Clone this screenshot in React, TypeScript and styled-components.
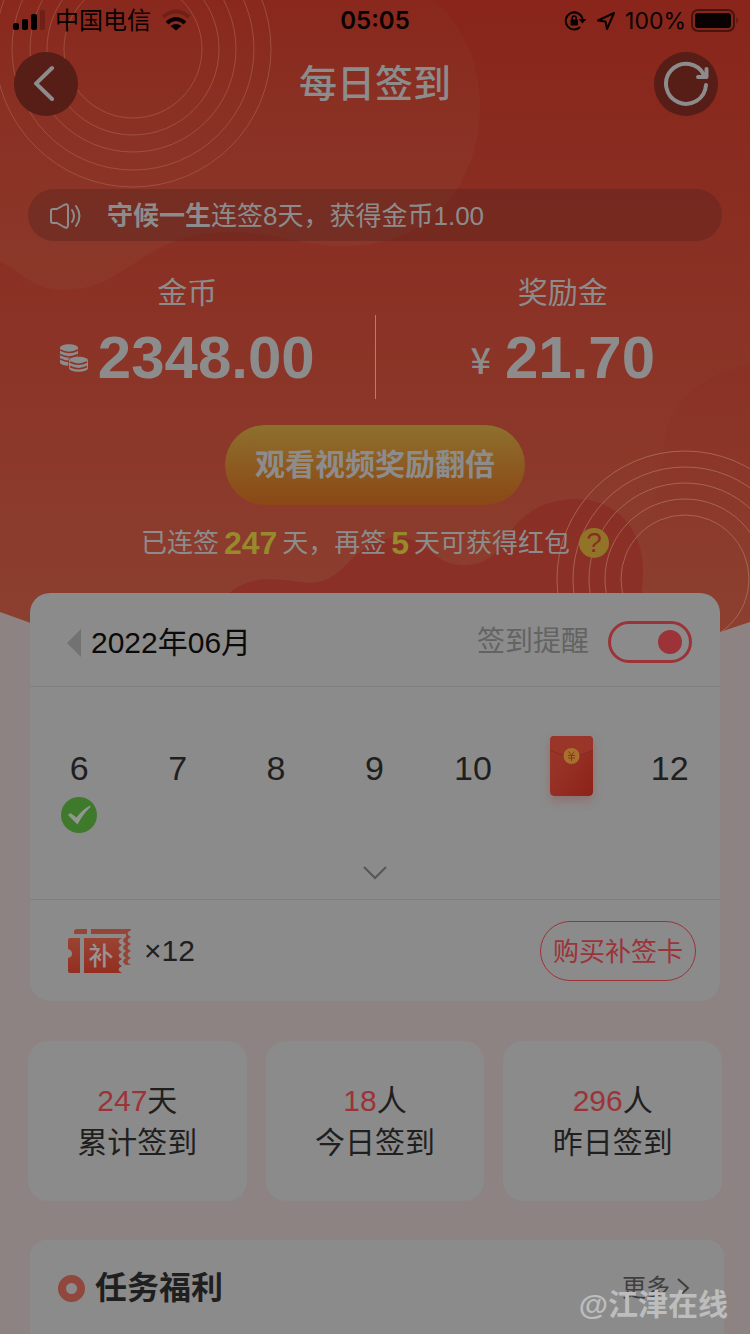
import React from 'react';
import styled, { createGlobalStyle } from 'styled-components';

const color = {
  white: '#8d8c8c',
  pink: '#8d8383',
  card: '#8b8b8b',
  line: '#7f7f7f',
  ink: '#1f1f1f',
  red: '#9c3338',
  muted: '#636363',
};

const GlobalStyle = createGlobalStyle`
  *, *::before, *::after { box-sizing: border-box; }
  html, body { margin: 0; }
  body {
    background: ${color.pink};
    color: ${color.ink};
    font-family: "Liberation Sans", "Noto Sans CJK SC", sans-serif;
    font-size: 30px;
    line-height: 42px;
  }
  button { font: inherit; color: inherit; border: 0; padding: 0; background: none; cursor: pointer; }
  h1, h2, p, ul, ol, dl, dd { margin: 0; padding: 0; list-style: none; }
  svg { display: block; flex: none; }
`;

const Page = styled.div`
  position: relative;
  display: flex;
  flex-direction: column;
  min-height: 100vh;
  overflow: hidden;
`;

const Backdrop = styled.svg`
  position: absolute;
  top: 0;
  left: 0;
  width: 100%;
  height: 700px;
  z-index: -1;
`;

const StatusBar = styled.div`
  display: grid;
  grid-template-columns: 1fr auto 1fr;
  align-items: center;
  height: 40px;
  padding: 2px 11px 0;
  color: #080202;
  font-family: Inter, "Noto Sans CJK SC", sans-serif;
  font-size: 24px;
  line-height: 38px;
`;

const StatusGroup = styled.div<{ $end?: boolean }>`
  display: flex;
  align-items: center;
  justify-content: ${(p) => (p.$end ? 'flex-end' : 'flex-start')};
  gap: ${(p) => (p.$end ? 9 : 10)}px;
`;

const Power = styled.span`
  display: flex;
  align-items: center;
  gap: 5px;
  font-size: 23px;
`;

const Clock = styled.time`
  font-weight: 600;
`;

const NavBar = styled.header`
  display: grid;
  grid-template-columns: 82px 1fr 82px;
  align-items: center;
  padding: 12px 14px;
`;

const Title = styled.h1`
  text-align: center;
  color: ${color.white};
  font-size: 38px;
  font-weight: 500;
  line-height: 60px;
`;

const RoundButton = styled.button`
  width: 64px;
  height: 64px;
  border-radius: 50%;
  background: #571d17;
  display: grid;
  place-items: center;
`;

const Notice = styled.p`
  display: flex;
  align-items: center;
  height: 52px;
  margin: 61px 28px 0;
  padding: 2px 22px 0;
  border-radius: 26px;
  background: rgba(70, 30, 28, 0.3);
  color: ${color.white};
  font-size: 26px;
`;

const NoticeText = styled.span`
  margin-left: 26px;
`;

const Balances = styled.dl`
  display: grid;
  grid-template-columns: 1fr 1px 1fr;
  margin-top: 31px;
  color: ${color.white};
`;

const Balance = styled.div`
  text-align: center;
`;

const Divider = styled.span`
  height: 84px;
  margin-top: 43px;
  background: ${color.white};
`;

const Amount = styled.dd`
  display: flex;
  align-items: center;
  justify-content: center;
  margin-top: 14px;
  gap: 10px;
  font-size: 60px;
  font-weight: 700;
  line-height: 60px;
`;

const Currency = styled.span`
  margin-right: 4px;
  font-family: "Noto Sans CJK SC", sans-serif;
  font-size: 36px;
  font-weight: 500;
`;

const VideoButton = styled.button`
  align-self: center;
  width: 300px;
  height: 80px;
  margin-top: 26px;
  border-radius: 40px;
  background: linear-gradient(#8e702d, #8b4716);
  color: ${color.white};
  font-weight: 700;
`;

const Streak = styled.p`
  display: flex;
  align-items: center;
  justify-content: center;
  gap: 5px;
  margin-top: 20px;
  color: ${color.white};
  font-size: 26px;
  line-height: 36px;
`;

const StreakCount = styled.strong`
  color: #988a2c;
  font-size: 32px;
`;

const HelpButton = styled.button`
  width: 30px;
  height: 30px;
  margin-left: 4px;
  border-radius: 50%;
  background: #927428;
  color: #8a2e23;
  font-size: 28px;
  line-height: 30px;
`;

const Card = styled.section`
  margin: 32px 30px 0;
  border-radius: 20px;
  background: ${color.card};
`;

const CardBar = styled.div`
  display: flex;
  align-items: center;
  justify-content: space-between;
  height: 94px;
  padding: 4px 28px 0 36px;
  border-bottom: 1px solid ${color.line};
`;

const MonthButton = styled.button`
  display: flex;
  align-items: center;
  gap: 10px;
  padding-top: 2px;
  color: #0a0a0a;
`;

const Reminder = styled.label`
  display: flex;
  align-items: center;
  gap: 19px;
  color: ${color.muted};
  font-size: 28px;
`;

const Toggle = styled.input`
  appearance: none;
  display: flex;
  align-items: center;
  width: 84px;
  height: 42px;
  margin: 0;
  padding: 0 7px;
  border: 3px solid ${color.red};
  border-radius: 21px;

  &::before {
    content: '';
    width: 24px;
    height: 24px;
    border-radius: 50%;
    background: ${color.red};
  }
  &:checked { justify-content: flex-end; }
`;

const Week = styled.ol`
  display: grid;
  grid-template-columns: repeat(7, 1fr);
  padding: 46px 1px 0 0;
  height: 150px;
`;

const Day = styled.li`
  display: flex;
  flex-direction: column;
  align-items: center;
  font-size: 34px;
`;

const DayButton = styled.button`
  height: 64px;
  line-height: 70px;
`;

const Envelope = styled.svg`
  margin-top: 2px;
  border-radius: 4px;
  box-shadow: 0 5px 10px rgba(150, 60, 50, 0.3);
`;

const ExpandButton = styled.button`
  display: grid;
  place-items: center;
  width: 100%;
  height: 63px;
  padding-top: 10px;
  border-bottom: 1px solid ${color.line};
`;

const CardFoot = styled.div`
  display: flex;
  align-items: center;
  justify-content: space-between;
  height: 101px;
  padding: 0 24px 0 38px;
`;

const Tickets = styled.span`
  display: flex;
  align-items: center;
  gap: 12px;
`;

const BuyButton = styled.button`
  width: 156px;
  height: 60px;
  padding-top: 2px;
  border: 1px solid ${color.red};
  border-radius: 30px;
  color: ${color.red};
  font-size: 26px;
`;

const Stats = styled.ul`
  display: grid;
  grid-template-columns: repeat(3, 1fr);
  gap: 19px;
  margin: 40px 28px 0;
`;

const Stat = styled.li`
  padding: 39px 0 37px;
  border-radius: 20px;
  background: ${color.card};
  text-align: center;
`;

const StatValue = styled.span`
  color: ${color.red};
`;

const Tasks = styled.section`
  flex: 1;
  margin: 39px 26px 0 30px;
  padding: 27px 34px 25px 28px;
  border-radius: 16px 16px 0 0;
  background: ${color.card};
`;

const TasksHead = styled.div`
  display: flex;
  align-items: center;
  gap: 10px;
`;

const Ring = styled.span`
  width: 27px;
  height: 27px;
  border: 8px solid #91463e;
  border-radius: 50%;
`;

const TasksTitle = styled.h2`
  flex: 1;
  font-size: 32px;
  font-weight: 700;
`;

const MoreLink = styled.a`
  display: flex;
  align-items: center;
  gap: 7px;
  color: #3f3f3f;
  font-size: 24px;
  text-decoration: none;
`;

const Watermark = styled.span`
  position: absolute;
  right: 22px;
  bottom: 8px;
  color: #bdbdbd;
  font-weight: 700;
`;

const HeroBackdrop = () => (
  <Backdrop viewBox="0 0 750 700" preserveAspectRatio="none" aria-hidden="true">
    <defs>
      <linearGradient id="sky" x1="0" y1="0" x2="0" y2="640" gradientUnits="userSpaceOnUse">
        <stop offset="0" stopColor="#89251b" />
        <stop offset="1" stopColor="#8c4030" />
      </linearGradient>
      <linearGradient id="blob" x1="0" y1="0" x2="0" y2="290" gradientUnits="userSpaceOnUse">
        <stop offset="0" stopColor="#8c4030" stopOpacity="0.1" />
        <stop offset="1" stopColor="#8b3c2d" stopOpacity="0.6" />
      </linearGradient>
      <linearGradient id="dusk" x1="0" y1="360" x2="0" y2="560" gradientUnits="userSpaceOnUse">
        <stop offset="0" stopColor="#8a2c24" stopOpacity="0.4" />
        <stop offset="1" stopColor="#8a2c24" stopOpacity="0" />
      </linearGradient>
      <clipPath id="hero">
        <path d="M0 0H750V622Q375 752 0 612Z" />
      </clipPath>
    </defs>
    <g clipPath="url(#hero)">
      <rect width="750" height="700" fill="url(#sky)" />
      <path
        d="M0 0H434C466 30 480 64 480 105C480 165 448 245 345 246C300 246 280 232 230 232C140 232 130 290 62 290C32 290 22 270 0 262Z"
        fill="url(#blob)"
      />
      <path d="M750 364C700 374 666 405 664 445C663 480 655 500 640 530L690 570H750Z" fill="url(#dusk)" />
      <path
        d="M222 600C245 575 268 578 300 582C340 588 342 558 376 542C400 532 418 540 432 552C446 568 482 574 502 545C520 512 545 499 577 499C616 499 643 530 643 570C643 585 641 592 638 640H222Z"
        fill="#8a2b24"
        fillOpacity="0.7"
      />
      <g fill="none" stroke="#a8664c" strokeOpacity="0.6">
        {[69, 86, 103, 121, 138].map((r) => (
          <circle key={r} cx="133" cy="49" r={r} />
        ))}
      </g>
      <g fill="none" stroke="#b07860" strokeOpacity="0.7">
        {[64, 80, 96, 112, 128].map((r) => (
          <circle key={r} cx="685" cy="579" r={r} />
        ))}
      </g>
    </g>
  </Backdrop>
);

const SignalIcon = () => (
  <svg width="34" height="22" viewBox="0 0 34 22" aria-hidden="true">
    <rect x="2" y="13" width="6" height="7" rx="2" />
    <rect x="11" y="9" width="6" height="11" rx="2" />
    <rect x="20" y="4" width="6" height="16" rx="2" />
    <rect x="29" y="0" width="5" height="20" rx="2" opacity="0.2" />
  </svg>
);

const WifiIcon = () => (
  <svg width="30" height="24" viewBox="0 0 30 24" fill="none" stroke="#080202" strokeWidth="4" aria-hidden="true">
    <path d="M2 8Q15-3 28 8" opacity="0.2" />
    <path d="M6 14Q15 6 24 14" />
    <path d="M15 21.500L9.500 17Q15 13 20.500 17Z" fill="#080202" stroke="none" />
  </svg>
);

const LockRotationIcon = () => (
  <svg width="23" height="22" viewBox="0 0 23 22" fill="none" stroke="#080202" strokeWidth="2" aria-hidden="true">
    <path d="M16.200 17A8.500 8.500 0 1 1 18.500 8.800" />
    <path d="M14.500 9H22.500L18.500 13.500Z" fill="#080202" stroke="none" />
    <rect x="6.500" y="9.500" width="7.500" height="6" rx="1" fill="#080202" stroke="none" />
    <path d="M8.200 10V8A2 2 0 0 1 12.200 8V10" strokeWidth="1.500" />
  </svg>
);

const LocationIcon = () => (
  <svg width="20" height="20" viewBox="0 0 20 20" fill="none" stroke="#080202" strokeWidth="2" strokeLinejoin="round" aria-hidden="true">
    <path d="M18 2L2 9.500L9.500 10.500L11 18Z" />
  </svg>
);

const BatteryIcon = () => (
  <svg width="48" height="24" viewBox="0 0 48 24" aria-hidden="true">
    <rect x="1" y="1" width="42" height="21" rx="6" fill="none" stroke="#080202" strokeOpacity="0.5" strokeWidth="2" />
    <rect x="4" y="4" width="36" height="15" rx="3" fill="#080202" />
    <path d="M45.500 8Q48 11.500 45.500 15Z" fill="#080202" fillOpacity="0.5" />
  </svg>
);

const BackIcon = () => (
  <svg width="24" height="38" viewBox="0 0 24 38" fill="none" stroke={color.white} strokeWidth="4" strokeLinecap="round" aria-hidden="true">
    <path d="M18 3L2 18.500L18 34" />
  </svg>
);

const RefreshIcon = () => (
  <svg width="46" height="46" viewBox="0 0 46 46" fill="none" stroke={color.white} strokeWidth="4" strokeLinecap="round" strokeLinejoin="round" aria-hidden="true">
    <path d="M43 24A20 20 0 1 1 41 14" />
    <path d="M43.500 8V16H35" />
  </svg>
);

const SpeakerIcon = () => (
  <svg width="31" height="26" viewBox="0 0 31 26" fill="none" stroke={color.white} strokeWidth="2" strokeLinecap="round" strokeLinejoin="round" aria-hidden="true">
    <path d="M7 6L14 2Q18 0 18 4V22Q18 26 14 24L7 20H3Q1 20 1 18V8Q1 6 3 6Z" />
    <path d="M22 7Q26 13 22 19" />
    <path d="M26 3Q33 13 26 23" />
  </svg>
);

const CoinsIcon = () => (
  <svg width="28" height="28" viewBox="0 0 28 28" fill={color.white} aria-hidden="true">
    <path d="M0 4C0-1 18-1 18 4V18C18 23 0 23 0 18Z" />
    <path d="M0 6Q9 11 18 6M0 10.500Q9 15.500 18 10.500M0 15Q9 20 18 15" fill="none" stroke="#8a3429" strokeWidth="1.500" />
    <path
      d="M9 16.500C9 11.500 28 11.500 28 16.500V24C28 29 9 29 9 24Z"
      stroke="#8a3429"
      strokeWidth="1.500"
      paintOrder="stroke"
    />
    <path d="M10 18Q18.500 22.500 27 18M10 22.500Q18.500 27 27 22.500" fill="none" stroke="#8a3429" strokeWidth="1.500" />
  </svg>
);

const TriangleIcon = () => (
  <svg width="15" height="28" viewBox="0 0 15 28" aria-hidden="true">
    <path d="M15 0V28L1 14Z" fill="#727272" />
  </svg>
);

const EnvelopeIcon = () => (
  <Envelope width="43" height="60" viewBox="0 0 43 60" aria-hidden="true">
    <defs>
      <linearGradient id="packet" x1="0" y1="0" x2="1" y2="1">
        <stop offset="0" stopColor="#98382c" />
        <stop offset="0.5" stopColor="#952f24" />
        <stop offset="1" stopColor="#8d2117" />
      </linearGradient>
    </defs>
    <rect width="43" height="60" rx="4" fill="url(#packet)" />
    <path d="M0 0H43V14Q21.500 26 0 14Z" fill="#993629" />
    <path d="M0 14Q21.500 26 43 14" fill="none" stroke="#832319" strokeOpacity="0.6" />
    <circle cx="21.500" cy="20" r="8" fill="#a5712d" />
    <path d="M18.500 15.500L21.500 19L24.500 15.500M18 19.500H25M18 22H25M21.500 19V25" fill="none" stroke="#93301f" />
  </Envelope>
);

const CheckIcon = () => (
  <svg width="36" height="36" viewBox="0 0 36 36" role="img" aria-label="已签到">
    <circle cx="18" cy="18" r="18" fill="#3f7a2c" />
    <path d="M7 18L9.500 16L15.500 20.500Q21 13 29 8.500L29.500 10Q22 17 16.500 27.500Z" fill="#919690" />
  </svg>
);

const ExpandIcon = () => (
  <svg width="24" height="14" viewBox="0 0 24 14" fill="none" stroke="#565656" strokeWidth="2" aria-hidden="true">
    <path d="M1 1L12 12L23 1" />
  </svg>
);

const TicketIcon = () => (
  <svg width="64" height="44" viewBox="0 0 64 44" role="img" aria-label="补签卡">
    <defs>
      <linearGradient id="ticket" x1="0" y1="0" x2="0" y2="1">
        <stop offset="0" stopColor="#9a4434" />
        <stop offset="1" stopColor="#932e20" />
      </linearGradient>
    </defs>
    <path d="M6 5V3Q6 0 9 0H19V5Z" fill="#964537" />
    <path
      d="M23 0H63V1q-7 3.500 0 7q-7 3.500 0 7q-7 3.500 0 7q-7 3.500 0 7q-7 3.500 0 7H58q-6-3.500 0-7q-6-3.500 0-7q-6-3.500 0-7q-6-3.500 0-7V5H23Z"
      fill="#964537"
    />
    <path d="M2 9H12V44H2Q0 44 0 42V29Q4 28 4 25Q4 21 0 20V11Q0 9 2 9Z" fill="url(#ticket)" />
    <path d="M16 9H54q-7 3.500 0 7q-7 3.500 0 7q-7 3.500 0 7q-7 3.500 0 7q-7 3.500 0 7H16Z" fill="url(#ticket)" />
    <text x="33" y="36" textAnchor="middle" fontSize="25" fontWeight="500" fill="#999393" fontFamily="Noto Sans CJK SC, sans-serif">
      补
    </text>
  </svg>
);

const MoreIcon = () => (
  <svg width="13" height="20" viewBox="0 0 13 20" fill="none" stroke="#3f3f3f" strokeWidth="2" aria-hidden="true">
    <path d="M1 1L11 10L1 19" />
  </svg>
);

const week = [
  { day: 6, signed: true },
  { day: 7 },
  { day: 8 },
  { day: 9 },
  { day: 10 },
  { day: 11, packet: true },
  { day: 12 },
];

const stats = [
  { value: 247, unit: '天', label: '累计签到' },
  { value: 18, unit: '人', label: '今日签到' },
  { value: 296, unit: '人', label: '昨日签到' },
];

export default function App() {
  return (
    <Page>
      <GlobalStyle />
      <HeroBackdrop />

      <StatusBar>
        <StatusGroup>
          <SignalIcon />
          中国电信
          <WifiIcon />
        </StatusGroup>
        <Clock>05:05</Clock>
        <StatusGroup $end>
          <LockRotationIcon />
          <LocationIcon />
          <Power>
            100%
            <BatteryIcon />
          </Power>
        </StatusGroup>
      </StatusBar>

      <NavBar>
        <RoundButton aria-label="返回">
          <BackIcon />
        </RoundButton>
        <Title>每日签到</Title>
        <RoundButton aria-label="刷新">
          <RefreshIcon />
        </RoundButton>
      </NavBar>

      <Notice>
        <SpeakerIcon />
        <NoticeText>
          <strong>守候一生</strong>连签8天，获得金币1.00
        </NoticeText>
      </Notice>

      <Balances>
        <Balance>
          <dt>金币</dt>
          <Amount>
            <CoinsIcon />
            2348.00
          </Amount>
        </Balance>
        <Divider />
        <Balance>
          <dt>奖励金</dt>
          <Amount>
            <Currency>¥</Currency>
            21.70
          </Amount>
        </Balance>
      </Balances>

      <VideoButton>观看视频奖励翻倍</VideoButton>

      <Streak>
        <span>已连签</span>
        <StreakCount>247</StreakCount>
        <span>天，再签</span>
        <StreakCount>5</StreakCount>
        <span>天可获得红包</span>
        <HelpButton>?</HelpButton>
      </Streak>

      <Card>
        <CardBar>
          <MonthButton>
            <TriangleIcon />
            2022年06月
          </MonthButton>
          <Reminder>
            签到提醒
            <Toggle type="checkbox" role="switch" defaultChecked />
          </Reminder>
        </CardBar>
        <Week>
          {week.map(({ day, signed, packet }) => (
            <Day key={day}>
              <DayButton aria-label={`${day}日`}>{packet ? <EnvelopeIcon /> : day}</DayButton>
              {signed && <CheckIcon />}
            </Day>
          ))}
        </Week>
        <ExpandButton aria-label="展开日历">
          <ExpandIcon />
        </ExpandButton>
        <CardFoot>
          <Tickets>
            <TicketIcon />
            ×12
          </Tickets>
          <BuyButton>购买补签卡</BuyButton>
        </CardFoot>
      </Card>

      <Stats>
        {stats.map(({ value, unit, label }) => (
          <Stat key={label}>
            <p>
              <StatValue>{value}</StatValue>
              {unit}
            </p>
            <p>{label}</p>
          </Stat>
        ))}
      </Stats>

      <Tasks>
        <TasksHead>
          <Ring />
          <TasksTitle>任务福利</TasksTitle>
          <MoreLink href="#tasks">
            更多
            <MoreIcon />
          </MoreLink>
        </TasksHead>
      </Tasks>

      <Watermark>@江津在线</Watermark>
    </Page>
  );
}
